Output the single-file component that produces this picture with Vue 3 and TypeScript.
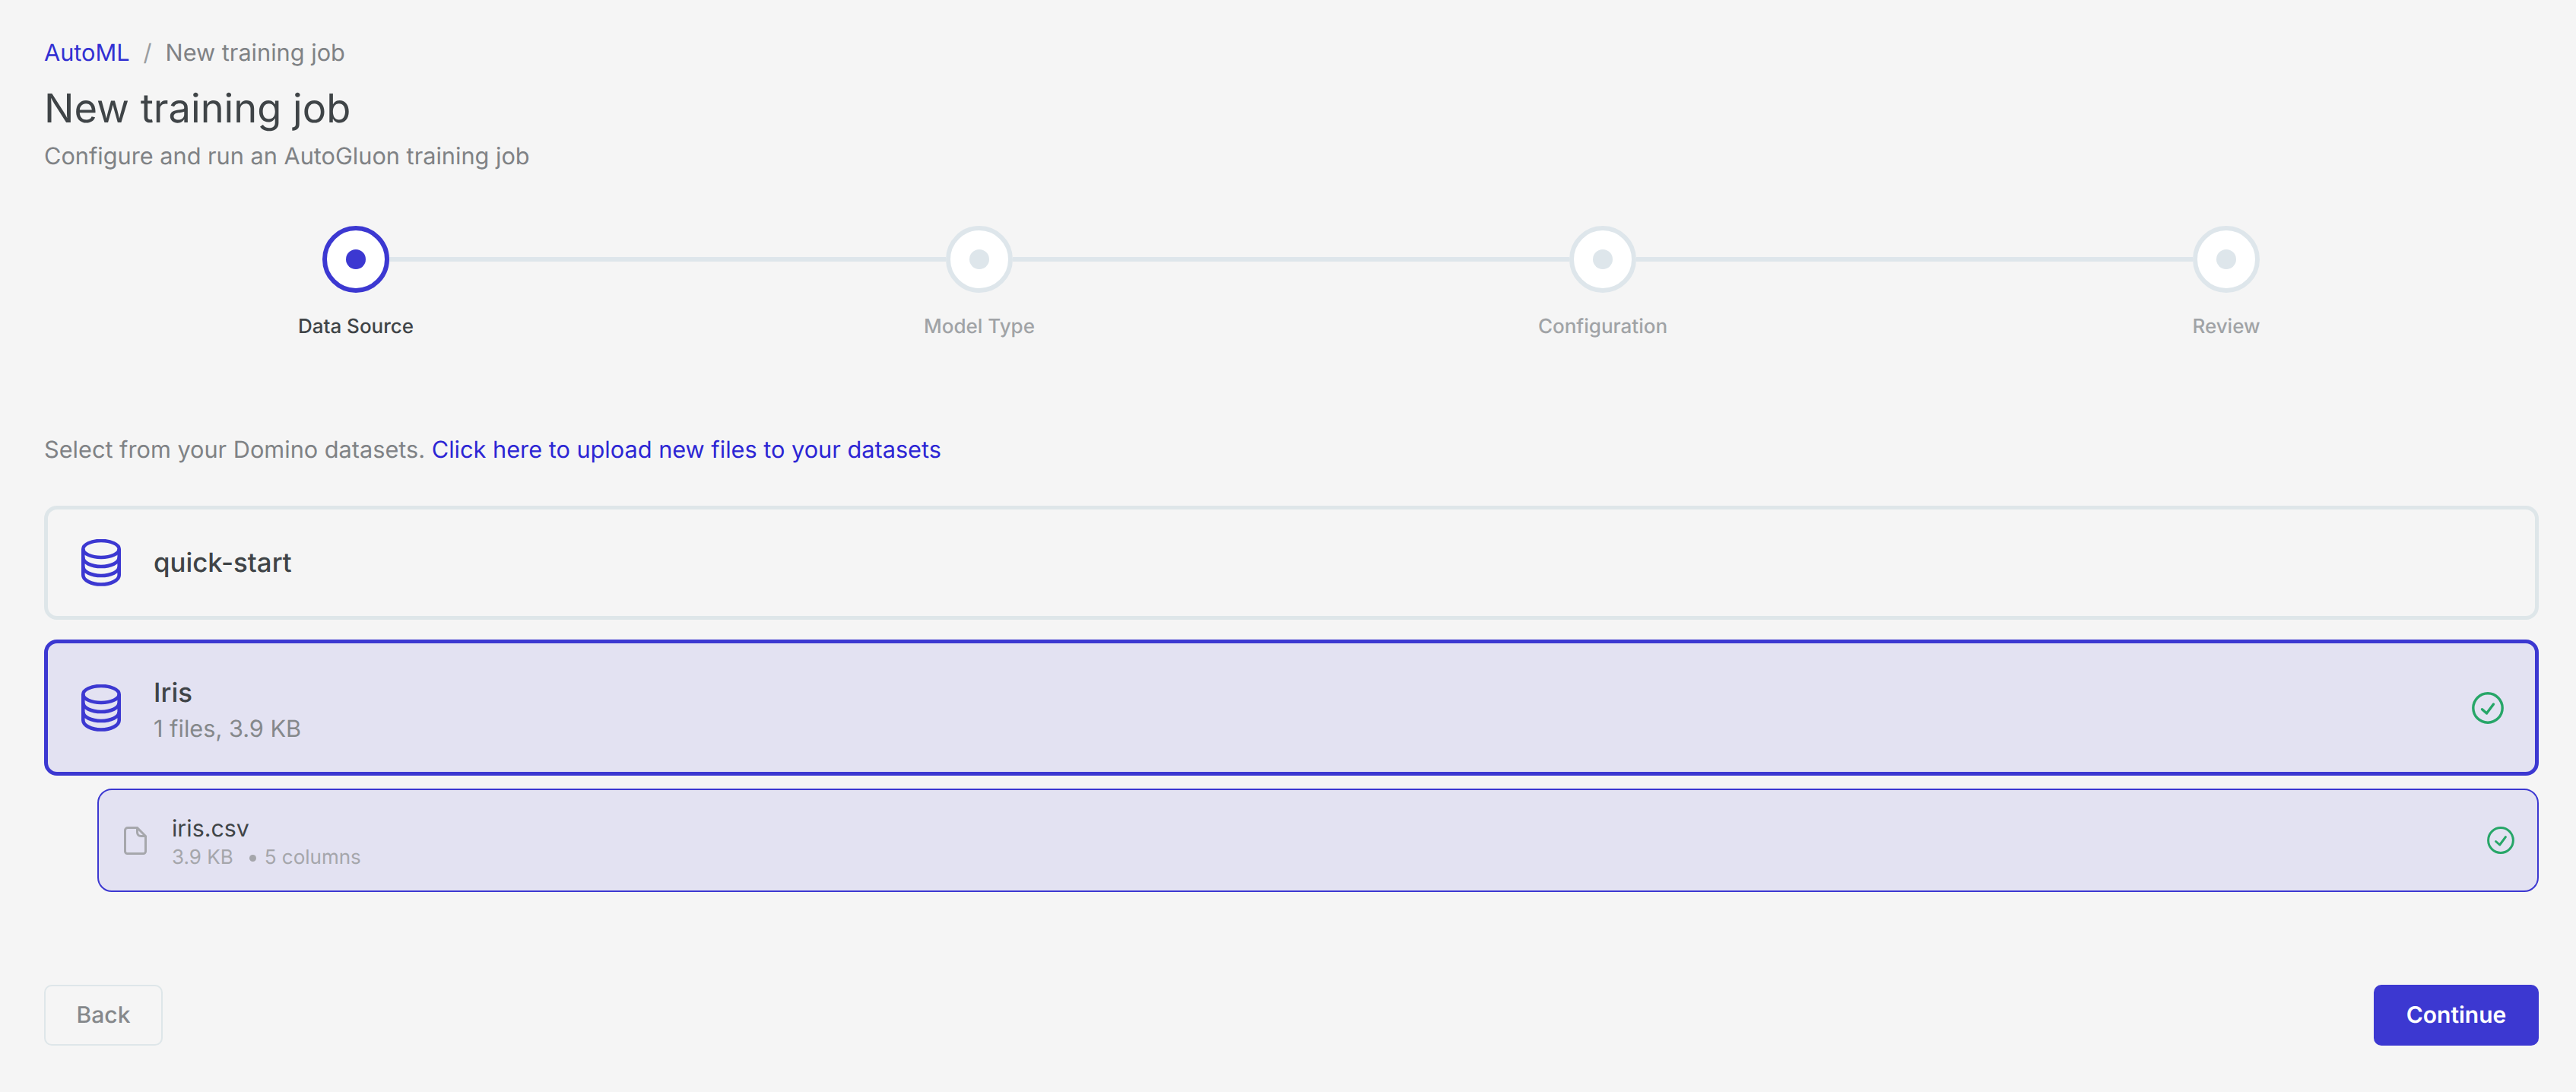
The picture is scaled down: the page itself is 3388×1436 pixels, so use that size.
<template>
  <div class="page">
    <nav class="crumbs">
      <a class="crumb-link">AutoML</a>
      <span class="crumb-sep">/</span>
      <span class="crumb-current">New training job</span>
    </nav>
    <h1 class="title">New training job</h1>
    <p class="subtitle">Configure and run an AutoGluon training job</p>

    <ol class="stepper">
      <li v-for="(step, i) in steps" :key="step" class="step" :class="{ 'is-active': i === 0 }">
        <span v-if="i > 0" class="step-line step-line-left"></span>
        <span v-if="i < steps.length - 1" class="step-line step-line-right"></span>
        <span class="step-circle"><span class="step-dot"></span></span>
        <span class="step-label">{{ step }}</span>
      </li>
    </ol>

    <p class="hint">
      Select from your Domino datasets.
      <a class="hint-link">Click here to upload new files to your datasets</a>
    </p>

    <div class="dataset">
      <svg class="db-icon" viewBox="0 0 52 62" fill="none">
        <ellipse cx="26" cy="13" rx="23.7" ry="11" />
        <path d="M2.3 13V47C2.3 54 13 59.5 26 59.5S49.7 54 49.7 47V13" />
        <path d="M2.3 24C2.3 31 13 36 26 36S49.7 31 49.7 24" />
        <path d="M2.3 36C2.3 43 13 48 26 48S49.7 43 49.7 36" />
      </svg>
      <div class="dataset-name">quick-start</div>
    </div>

    <div class="dataset is-selected">
      <svg class="db-icon" viewBox="0 0 52 62" fill="none">
        <ellipse cx="26" cy="13" rx="23.7" ry="11" />
        <path d="M2.3 13V47C2.3 54 13 59.5 26 59.5S49.7 54 49.7 47V13" />
        <path d="M2.3 24C2.3 31 13 36 26 36S49.7 31 49.7 24" />
        <path d="M2.3 36C2.3 43 13 48 26 48S49.7 43 49.7 36" />
      </svg>
      <div class="dataset-text">
        <div class="dataset-name">Iris</div>
        <div class="dataset-meta">1 files, 3.9 KB</div>
      </div>
      <svg class="check check-lg" viewBox="0 0 42 42" fill="none">
        <circle cx="21" cy="21" r="19.2" />
        <path d="M13.5 22.7L19.5 28L28.5 16" />
      </svg>
    </div>

    <div class="file">
      <svg class="file-icon" viewBox="0 0 30 37" fill="none">
        <path d="M5 1.5H17.5L28.5 12.5V32.5C28.5 34.2 27.2 35.5 25.5 35.5H4.5C2.8 35.5 1.5 34.2 1.5 32.5V5C1.5 3 3 1.5 5 1.5Z" />
        <path d="M17.5 1.5V7.5C17.5 10.5 19.5 12.5 22.5 12.5H28.5" />
      </svg>
      <div class="file-text">
        <div class="file-name">iris.csv</div>
        <div class="file-meta">
          <span>3.9 KB</span>
          <span class="file-bullet"></span>
          <span>5 columns</span>
        </div>
      </div>
      <svg class="check check-sm" viewBox="0 0 36 36" fill="none">
        <circle cx="18" cy="18" r="16.4" />
        <path d="M11.6 19.5L16.7 24L24.4 13.7" />
      </svg>
    </div>

    <footer class="actions">
      <button class="btn btn-back" type="button">Back</button>
      <button class="btn btn-continue" type="button">Continue</button>
    </footer>
  </div>
</template>

<script setup lang="ts">
const steps: string[] = ['Data Source', 'Model Type', 'Configuration', 'Review']
</script>

<style>
html,
body {
  margin: 0;
  background: #f5f5f5;
}
</style>

<style scoped>
.page {
  box-sizing: border-box;
  height: 1436px;
  padding: 50px 49px 61px 58px;
  display: flex;
  flex-direction: column;
  background: #f5f5f5;
  color: #3f4447;
  font-family: Inter, 'Noto Sans', sans-serif;
  text-rendering: geometricPrecision;
}

.crumbs {
  display: flex;
  gap: 18px;
  font-size: 30.7px;
  line-height: 40px;
}
.crumb-link {
  color: #3230d2;
}
.crumb-sep {
  color: #9a9da0;
}
.crumb-current {
  color: #7f8285;
}

.title {
  margin: 18px 0 0;
  font-size: 52.4px;
  line-height: 68px;
  font-weight: 400;
}
.subtitle {
  margin: 10px 0 0;
  font-size: 30.7px;
  line-height: 40px;
  color: #7f8285;
}

/* Stepper */
.stepper {
  list-style: none;
  margin: 71px 0 0;
  padding: 0;
  display: grid;
  grid-template-columns: repeat(4, 820px);
}
.step {
  position: relative;
  display: flex;
  flex-direction: column;
  align-items: center;
}
.step-line {
  position: absolute;
  top: 41px;
  height: 6px;
  background: #dee6eb;
}
.step-line-left {
  left: 0;
  right: calc(50% + 44px);
}
.step-line-right {
  left: calc(50% + 44px);
  right: 0;
}
.step-circle {
  box-sizing: border-box;
  width: 88px;
  height: 88px;
  border: 6px solid #dee6eb;
  border-radius: 50%;
  background: #fff;
  display: flex;
  align-items: center;
  justify-content: center;
}
.step-dot {
  width: 26px;
  height: 26px;
  border-radius: 50%;
  background: #dee6eb;
}
.step-label {
  margin-top: 27px;
  font-size: 26px;
  line-height: 36px;
  font-weight: 500;
  color: #a0a3a6;
}
.step.is-active .step-circle {
  border-color: #3c38d1;
}
.step.is-active .step-dot {
  background: #3c38d1;
}
.step.is-active .step-label {
  color: #3f4447;
}

.hint {
  margin: 124px 0 0;
  font-size: 30.7px;
  line-height: 40px;
  color: #7f8285;
}
.hint-link {
  color: #2c25d4;
}

/* Dataset cards */
.dataset {
  box-sizing: border-box;
  height: 150px;
  margin-top: 53px;
  padding: 0 41px 0 44px;
  display: flex;
  align-items: center;
  gap: 43px;
  border: 5px solid #dee6e9;
  border-radius: 17px;
}
.dataset.is-selected {
  height: 179px;
  margin-top: 26px;
  border-color: #3c38d1;
  background: #e3e2f2;
}
.db-icon {
  flex: none;
  width: 52px;
  height: 62px;
}
.db-icon ellipse,
.db-icon path {
  stroke: #3c38d1;
  stroke-width: 4.6;
}
.dataset-text {
  flex: 1;
  min-width: 0;
  padding-top: 7px;
}
.dataset-name {
  font-size: 34.8px;
  line-height: 44px;
  font-weight: 500;
}
.dataset-meta {
  margin-top: 6px;
  font-size: 30.7px;
  line-height: 40px;
  color: #85888b;
}

/* File row */
.file {
  box-sizing: border-box;
  height: 136px;
  margin: 17px 0 0 70px;
  padding: 0 30px 0 33px;
  display: flex;
  align-items: center;
  gap: 33px;
  border: 2px solid #3c38d1;
  border-radius: 19px;
  background: #e3e2f2;
}
.file-icon {
  flex: none;
  width: 30px;
  height: 37px;
}
.file-icon path {
  stroke: #a6a7ac;
  stroke-width: 3;
}
.file-text {
  flex: 1;
  min-width: 0;
  padding-top: 5px;
}
.file-name {
  font-size: 30.4px;
  line-height: 40px;
}
.file-meta {
  display: flex;
  align-items: center;
  font-size: 26px;
  line-height: 36px;
  color: #a5a6ab;
}
.file-bullet {
  width: 9px;
  height: 9px;
  margin: 2px 11px 0 21px;
  border-radius: 50%;
  background: #a5a6ab;
}

.check {
  flex: none;
}
.check-lg {
  width: 42px;
  height: 42px;
}
.check-sm {
  width: 36px;
  height: 36px;
}
.check circle,
.check path {
  stroke: #27a668;
  stroke-width: 3.4;
}
.check-sm circle,
.check-sm path {
  stroke-width: 3;
}
.check path {
  stroke-linecap: round;
  stroke-linejoin: round;
}

/* Footer */
.actions {
  margin-top: auto;
  display: flex;
  justify-content: space-between;
}
.btn {
  box-sizing: border-box;
  height: 80px;
  border-radius: 10px;
  font-family: inherit;
  font-size: 30px;
  font-weight: 500;
  text-rendering: inherit;
}
.btn-back {
  width: 156px;
  border: 2px solid #dee6e9;
  background: transparent;
  color: #85888b;
}
.btn-continue {
  width: 217px;
  border: 0;
  background: #3c38d1;
  color: #fff;
  font-weight: 600;
}
</style>
